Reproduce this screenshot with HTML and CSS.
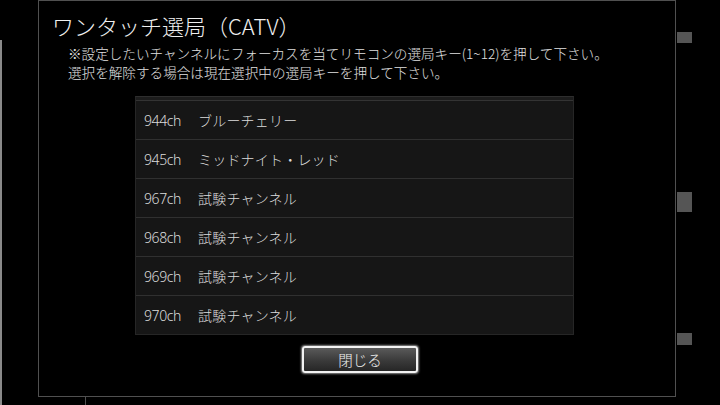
FILE: index.html
```html
<!DOCTYPE html>
<html lang="ja">
<head>
<meta charset="utf-8">
<link rel="stylesheet" href="styles.css">
</head>
<body>
<div class="edge"></div>
<div class="main">
  <div class="dialog">
    <h1 class="title">ワンタッチ選局（CATV）</h1>
    <p class="note">※設定したいチャンネルにフォーカスを当てリモコンの選局キー(1~12)を押して下さい。<br>選択を解除する場合は現在選択中の選局キーを押して下さい。</p>
    <div class="list">
      <div class="list-head"></div>
      <div class="row"><span class="ch">944ch</span><span class="name">ブルーチェリー</span></div>
      <div class="row"><span class="ch">945ch</span><span class="name">ミッドナイト・レッド</span></div>
      <div class="row"><span class="ch">967ch</span><span class="name">試験チャンネル</span></div>
      <div class="row"><span class="ch">968ch</span><span class="name">試験チャンネル</span></div>
      <div class="row"><span class="ch">969ch</span><span class="name">試験チャンネル</span></div>
      <div class="row"><span class="ch">970ch</span><span class="name">試験チャンネル</span></div>
    </div>
    <div class="actions"><button class="btn">閉じる</button></div>
  </div>
  <div class="stub"></div>
</div>
<div class="side">
  <div class="sq sq1"></div>
  <div class="sq sq2"></div>
  <div class="sq sq3"></div>
</div>
</body>
</html>
```
FILE: styles.css
```css
html, body {
  margin: 0;
  padding: 0;
  background: #000;
}
body {
  width: 720px;
  height: 405px;
  overflow: hidden;
  display: flex;
  font-family: "Noto Sans CJK JP", "Noto Sans", sans-serif;
  color: #e6e6e6;
}
.edge {
  width: 2px;
  margin-top: 40px;
  background: #8a8a8a;
}
.main {
  margin-left: 36px;
  width: 638px;
  display: flex;
  flex-direction: column;
}
.dialog {
  height: 397px;
  box-sizing: border-box;
  border: 1px solid #505050;
  padding: 9px 0 0 13px;
}
.stub {
  margin-left: 47px;
  width: 1px;
  flex: 1;
  background: #505050;
}
.title {
  margin: 0;
  font-size: 22px;
  font-weight: 300;
  line-height: 30px;
  color: #f0f0f0;
}
.note {
  margin: 4px 0 0 16px;
  font-size: 13.6px;
  line-height: 19px;
  color: #e0e0e0;
  font-weight: 300;
}
.list {
  margin: 14px 0 0 83px;
  width: 439px;
  box-sizing: border-box;
  border: 1px solid #262626;
  border-top: 1px solid #2e2e2e;
  background: #161616;
}
.list-head {
  height: 3px;
  background: #1c1c1c;
  border-bottom: 1px solid #333;
}
.row {
  height: 38px;
  display: flex;
  align-items: center;
  border-top: 1px solid #303030;
  font-size: 14px;
  font-weight: 300;
  color: #dcdcdc;
}
.list-head + .row {
  border-top: none;
}
.ch {
  width: 54px;
  padding-left: 8px;
  font-family: "Noto Sans", "Noto Sans CJK JP", sans-serif;
  letter-spacing: -0.4px;
}
.name {
  letter-spacing: 0.2px;
}
.actions {
  margin: 11px 0 0 250px;
}
.btn {
  width: 116px;
  height: 27px;
  box-sizing: border-box;
  border: 2px solid #f2f2f2;
  border-radius: 3px;
  box-shadow: 0 0 2px 1px rgba(255,255,255,0.55);
  background: linear-gradient(#5a5a5a, #3a3a3a 55%, #262626);
  color: #f0f0f0;
  font-family: "Noto Sans CJK JP", sans-serif;
  font-size: 14.5px;
  font-weight: 300;
  line-height: 21px;
  padding: 0;
}
.side {
  margin-left: 1px;
  width: 16px;
  display: flex;
  flex-direction: column;
}
.sq {
  width: 15px;
  background: #555;
}
.sq1 { margin-top: 32px; height: 11px; }
.sq2 { margin-top: 149px; height: 20px; }
.sq3 { margin-top: 121px; height: 12px; }
```
